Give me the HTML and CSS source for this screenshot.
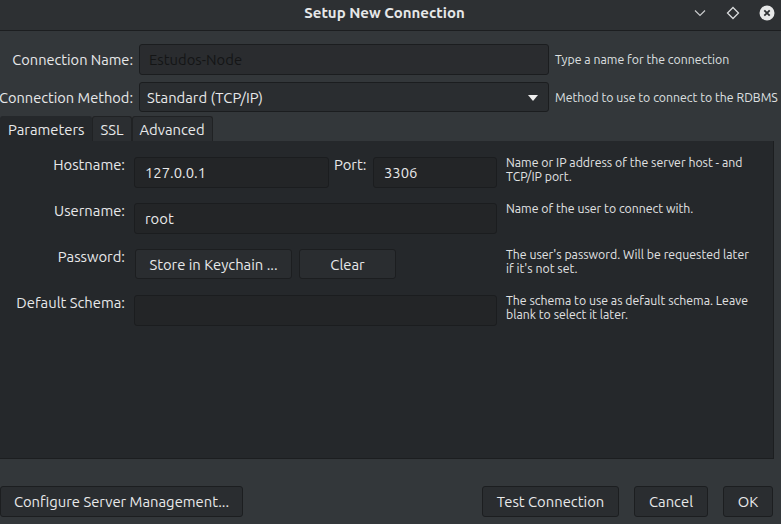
FILE: index.html
```html
<!DOCTYPE html>
<html>
<head>
<meta charset="utf-8">
<link rel="stylesheet" href="styles.css">
</head>
<body>
<div class="window">
  <header class="titlebar">
    <div class="title">Setup New Connection</div>
    <div class="wm">
      <svg class="wm-icon" width="14" height="14" viewBox="0 0 14 14"><path d="M2 4.5 L7 9.5 L12 4.5" fill="none" stroke="#c8cacc" stroke-width="1.2"/></svg>
      <svg class="wm-icon" width="14" height="14" viewBox="0 0 14 14"><path d="M7 1.5 L12.5 7 L7 12.5 L1.5 7 Z" fill="none" stroke="#d8dadc" stroke-width="1.3"/></svg>
      <svg class="wm-icon" width="16" height="16" viewBox="0 0 16 16"><circle cx="8" cy="8" r="7.5" fill="#e6e7e8"/><path d="M5.3 5.3 L10.7 10.7 M10.7 5.3 L5.3 10.7" stroke="#2d3033" stroke-width="1.8"/></svg>
    </div>
  </header>

  <div class="top-form">
    <label class="lbl"><span>Connection Name:</span></label>
    <div class="input name-input">Estudos-Node</div>
    <div class="hint">Type a name for the connection</div>

    <label class="lbl"><span>Connection Method:</span></label>
    <div class="input select">Standard (TCP/IP)<span class="caret"></span></div>
    <div class="hint">Method to use to connect to the RDBMS</div>
  </div>

  <nav class="tabs">
    <div class="tab active">Parameters</div>
    <div class="tab">SSL</div>
    <div class="tab">Advanced</div>
  </nav>

  <section class="panel">
    <div class="params">
      <label class="plbl">Hostname:</label>
      <div class="input field">127.0.0.1</div>
      <label class="plbl port-lbl">Port:</label>
      <div class="input field">3306</div>
      <div class="phint">Name or IP address of the server host - and TCP/IP port.</div>

      <label class="plbl">Username:</label>
      <div class="input field wide">root</div>
      <div class="phint">Name of the user to connect with.</div>

      <label class="plbl">Password:</label>
      <div class="btn-row wide">
        <button class="btn keychain">Store in Keychain ...</button>
        <button class="btn clear">Clear</button>
      </div>
      <div class="phint">The user's password. Will be requested later if it's not set.</div>

      <label class="plbl">Default Schema:</label>
      <div class="input field wide"></div>
      <div class="phint">The schema to use as default schema. Leave blank to select it later.</div>
    </div>
  </section>

  <footer class="actions">
    <button class="btn big configure">Configure Server Management...</button>
    <div class="spacer"></div>
    <button class="btn big test">Test Connection</button>
    <button class="btn big cancel">Cancel</button>
    <button class="btn big ok">OK</button>
  </footer>
</div>
</body>
</html>
```

FILE: styles.css
```css
* { box-sizing: border-box; }
html, body {
  margin: 0;
  padding: 0;
  background: #33373a;
  width: 781px;
  height: 524px;
  overflow: hidden;
}
body {
  font-family: "Ubuntu", "Noto Sans", "Open Sans", sans-serif;
  font-size: 14.8px;
  color: #e8e9ea;
}
.window {
  display: flex;
  flex-direction: column;
  height: 524px;
}
.titlebar {
  height: 31px;
  flex: none;
  background: #2d3033;
  border-bottom: 1px solid #1c1e20;
  display: flex;
  align-items: center;
  justify-content: center;
  position: relative;
}
.title {
  font-weight: bold;
  font-size: 15px;
  color: #e6e7e8;
  margin-left: -12px;
  margin-top: -5px;
}
.wm {
  position: absolute;
  right: 6px;
  top: 5px;
  display: flex;
  align-items: center;
  gap: 19px;
}
.wm-icon { display: block; }

.top-form {
  display: grid;
  grid-template-columns: 133px 410px 1fr;
  column-gap: 6px;
  row-gap: 7px;
  padding-top: 13px;
  align-items: center;
}
.lbl {
  display: flex;
  justify-content: flex-end;
  white-space: nowrap;
  font-size: 14.6px;
  color: #e8e9ea;
}
.input {
  background: #232527;
  border: 1px solid #1b1d1f;
  border-radius: 3px;
  height: 31px;
  display: flex;
  align-items: center;
  padding-left: 10px;
  font-size: 14.8px;
  color: #e8e9ea;
}
.name-input {
  color: #141516;
  background: #2a2c2f;
  padding-left: 9px;
}
.select {
  height: 30px;
  padding-left: 7px;
  background: #2a2d30;
  position: relative;
}
.caret {
  position: absolute;
  right: 10px;
  top: 12px;
  width: 0;
  height: 0;
  border-left: 5px solid transparent;
  border-right: 5px solid transparent;
  border-top: 6px solid #eeeeee;
}
.hint {
  font-size: 12.3px;
  color: #dfe0e1;
  white-space: nowrap;
}

.tabs {
  display: flex;
  margin-top: 4px;
  height: 25px;
  flex: none;
}
.tab {
  padding: 0 7px;
  display: flex;
  align-items: center;
  font-size: 14.8px;
  background: #2b2e31;
  border: 1px solid #202224;
  border-bottom: none;
  border-radius: 3px 3px 0 0;
  color: #e8e9ea;
}
.tab.active {
  background: #25282b;
  border-color: #25282b;
  padding: 0 7px 0 7px;
}

.panel {
  width: 774px;
  height: 318px;
  flex: none;
  background: #25282b;
  border-right: 1px solid #1c1e20;
  border-bottom: 1px solid #1c1e20;
}
.params {
  display: grid;
  grid-template-columns: 134px 195px 44px 124px 1fr;
  grid-auto-rows: 31px;
  row-gap: 15px;
  padding-top: 16px;
}
.plbl {
  text-align: right;
  padding-right: 9px;
  padding-top: 0;
  line-height: 16px;
  font-size: 14.8px;
  white-space: nowrap;
}
.port-lbl {
  text-align: left;
  padding-left: 5px;
  padding-right: 0;
}
.field {
  background: #232527;
  border-color: #1b1d1f;
}
.wide { grid-column: 2 / span 3; }
.phint {
  padding-left: 9px;
  font-size: 12.3px;
  line-height: 13.5px;
  color: #e2e3e4;
  margin-top: -1px;
  padding-right: 20px;
}
.btn-row {
  display: flex;
  gap: 7px;
  padding-left: 1px;
}
.btn {
  font-family: inherit;
  font-size: 14.8px;
  color: #e8e9ea;
  background: #2a2d30;
  border: 1px solid #1c1e20;
  border-radius: 3px;
  height: 30px;
  padding: 0;
  display: flex;
  align-items: center;
  justify-content: center;
}
.keychain { width: 157px; }
.clear { width: 97px; }

.actions {
  display: flex;
  padding-top: 27px;
  gap: 15px;
  padding-right: 8px;
}
.spacer { flex: 1; }
.btn.big { height: 31px; }
.configure { width: 243px; }
.test { width: 137px; }
.cancel { width: 74px; }
.ok { width: 50px; }
```
